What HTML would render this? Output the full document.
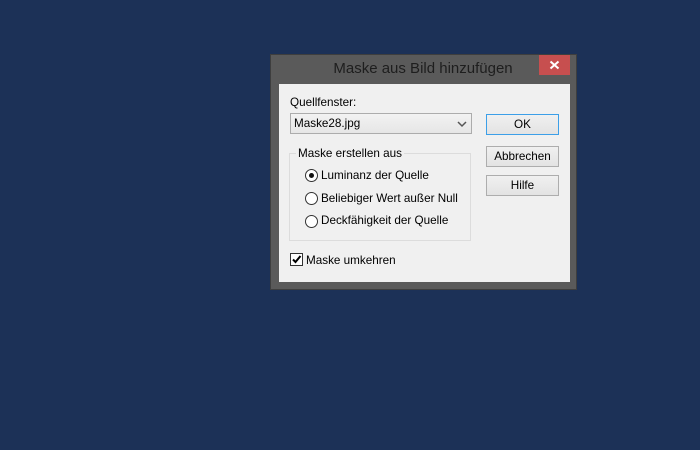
<!DOCTYPE html>
<html><head><style>
body{margin:0;width:700px;height:450px;background:#1c3157;position:relative;overflow:hidden;font-family:"Liberation Sans",sans-serif;font-size:11.7px;color:#000}
.frame{position:absolute;left:270px;top:54px;width:307px;height:236px;background:#5a5a5a;border:1px solid #3e3e3e;box-sizing:border-box}
.title{position:absolute;left:270px;top:60px;width:306px;text-align:center;font-size:15px;color:#1e1e1e}
.close{position:absolute;left:539px;top:55px;width:31px;height:20px;background:#c74f4f;color:#fff;text-align:center}
.client{position:absolute;left:279px;top:84px;width:291px;height:198px;background:#f0f0f0}
.a{position:absolute}
.combo{left:290px;top:113px;width:180px;height:19px;border:1px solid #acacac;background:linear-gradient(#f2f2f2,#e6e6e6)}
.btn{position:absolute;left:486px;width:71px;height:19px;border:1px solid #adadad;background:linear-gradient(#f0f0f0,#e3e3e3);text-align:center;line-height:19px}
.grp{left:289px;top:153px;width:180px;height:86px;border:1px solid #dcdcdc}
.radio{position:absolute;width:11px;height:11px;border:1px solid #333;border-radius:50%;background:#fff}
</style></head><body>
<div class="frame"></div>
<div class="title">Maske aus Bild hinzufügen</div>
<div class="close"><svg width="31" height="20"><path d="M11.5 6.5L19.5 13.5M19.5 6.5L11.5 13.5" stroke="#fff" stroke-width="2"/></svg></div>
<div class="client"></div>
<div class="a" style="left:290px;top:96px">Quellfenster:</div>
<div class="a combo"><span style="position:absolute;left:3px;top:3px">Maske28.jpg</span><svg width="10" height="8" style="position:absolute;right:4px;top:6px"><path d="M1 2L5 6L9 2" stroke="#555" stroke-width="1.5" fill="none"/></svg></div>
<div class="btn" style="top:114px;border-color:#3c9fe8">OK</div>
<div class="btn" style="top:146px">Abbrechen</div>
<div class="btn" style="top:175px">Hilfe</div>
<div class="a grp"></div>
<div class="a" style="left:296px;top:147px;background:#f0f0f0;padding:0 2px">Maske erstellen aus</div>
<div class="radio" style="left:305px;top:169px"><div style="position:absolute;left:3px;top:3px;width:5px;height:5px;border-radius:50%;background:#111"></div></div>
<div class="a" style="left:321px;top:169px">Luminanz der Quelle</div>
<div class="radio" style="left:305px;top:192px"></div>
<div class="a" style="left:321px;top:192px">Beliebiger Wert außer Null</div>
<div class="radio" style="left:305px;top:215px"></div>
<div class="a" style="left:321px;top:214px">Deckfähigkeit der Quelle</div>
<div class="a" style="left:290px;top:253px;width:11px;height:11px;border:1px solid #333;background:#fff"><svg width="11" height="11" style="position:absolute;left:0;top:0"><path d="M2 5.5L4.5 8L9.5 2" stroke="#000" stroke-width="2" fill="none"/></svg></div>
<div class="a" style="left:306px;top:254px">Maske umkehren</div>
</body></html>
